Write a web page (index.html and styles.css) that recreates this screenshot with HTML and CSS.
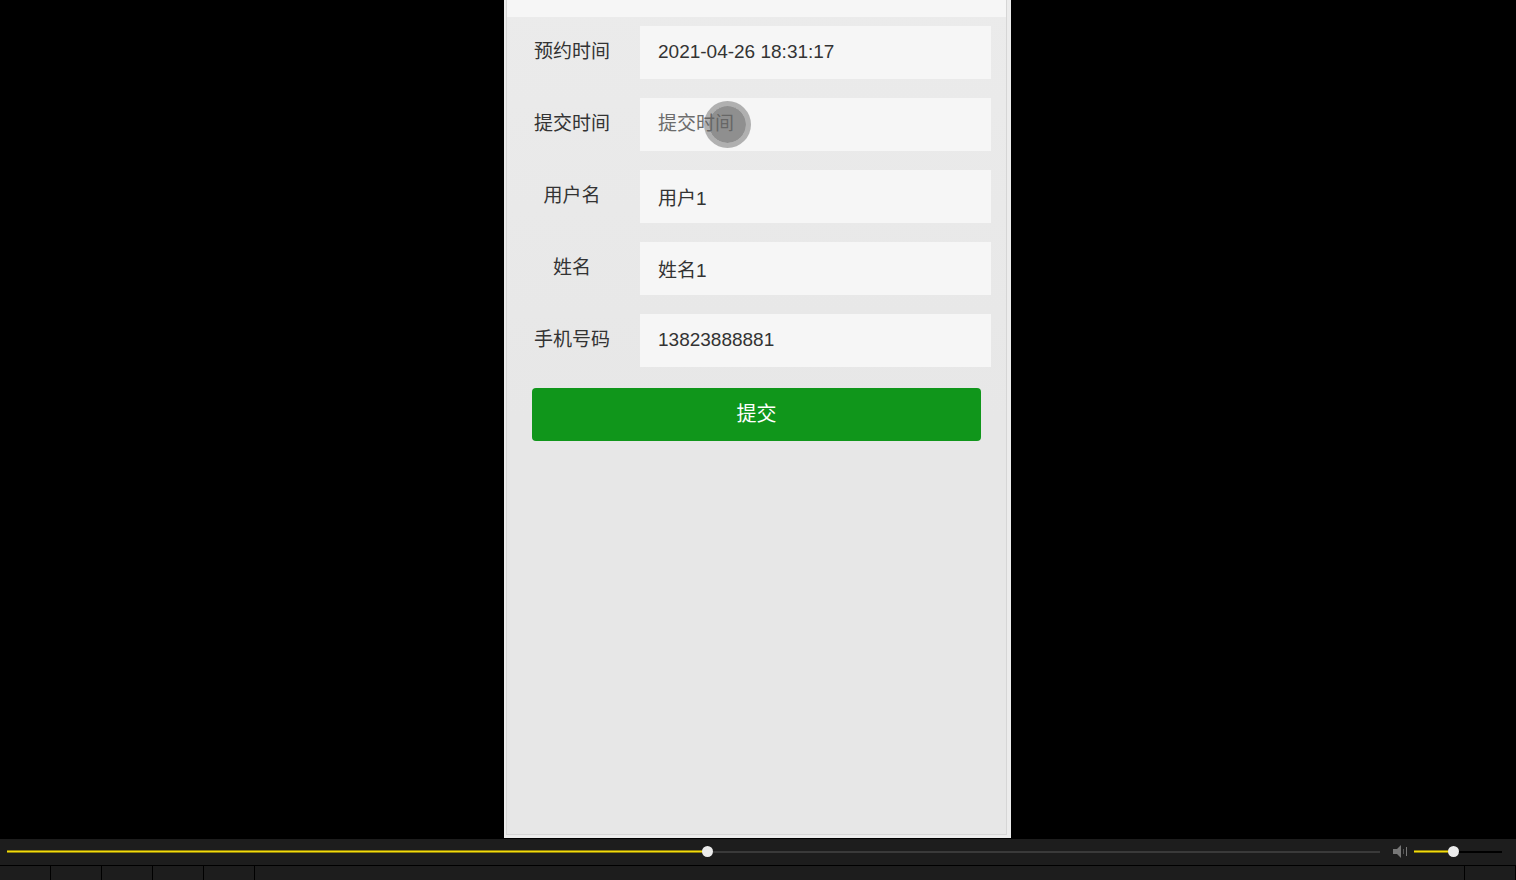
FILE: index.html
```html
<!doctype html>
<html lang="zh-CN">
	<head>
		<meta charset="utf-8">
		<title>预约</title>
		<link rel="stylesheet" href="styles.css">
	</head>
	<body>
		
		<main class="stage">
			<div class="phone">
				<div class="screen">
					<header class="topbar"></header>
					
					<form class="booking">
						<div class="row">
							<label for="booked">预约时间</label>
							<input type="text" id="booked" value="2021-04-26 18:31:17">
						</div>
						<div class="row">
							<label for="submitted">提交时间</label>
							<input type="text" id="submitted" placeholder="提交时间">
							<span class="touch"></span>
						</div>
						<div class="row">
							<label for="username">用户名</label>
							<input type="text" id="username" value="用户1">
						</div>
						<div class="row">
							<label for="fullname">姓名</label>
							<input type="text" id="fullname" value="姓名1">
						</div>
						<div class="row">
							<label for="phone">手机号码</label>
							<input type="text" id="phone" value="13823888881">
						</div>
						<button type="submit" class="submit">提交</button>
					</form>
				</div>
			</div>
		</main>
		
		<footer class="controls">
			<div class="timeline">
				<input type="range" class="seek" aria-label="播放进度" min="0" max="1000" value="510" style="--played: 51%">
				<button class="mute" aria-label="静音">
					<svg width="16" height="14" viewBox="0 0 16 14">
						<path d="M1 4h4l4-4v13l-4-4H1z" fill="#777"/>
						<path d="M11.500 4v5" stroke="#555" stroke-width="1"/>
						<path d="M14.500 2v9" stroke="#777" stroke-width="1"/>
					</svg>
				</button>
				<input type="range" class="volume" aria-label="音量" min="0" max="1000" value="440" style="--played: 44%">
			</div>
			<div class="buttons">
				<button aria-label="播放"></button>
				<button aria-label="停止"></button>
				<button aria-label="上一个"></button>
				<button aria-label="下一个"></button>
				<button aria-label="打开"></button>
				<button class="last" aria-label="全屏"></button>
			</div>
		</footer>
		
	</body>
</html>
```

FILE: styles.css
```css
* {
	box-sizing: border-box;
}
body {
	display: flex;
	flex-direction: column;
	height: 100vh;
	margin: 0;
	overflow: hidden;
	background: #000;
	font-family: "Liberation Sans", "Noto Sans CJK SC", sans-serif;
}
button,
input {
	margin: 0;
	font-family: inherit;
}

/* video picture */
.stage {
	display: flex;
	flex: 1;
	justify-content: center;
	min-height: 0;
	padding-right: 1px;
}
.phone {
	display: flex;
	width: 507px;
	max-width: 100%;
	padding: 0 4px 3px 2px;
	background: #ececec;
}
.screen {
	flex: 1;
	border: 1px solid #d6d6d6;
	border-top: 0;
	background: linear-gradient(#ebebeb, #e7e7e7 50%);
}
.topbar {
	height: 17px;
	background: #f6f6f6;
}
.booking {
	padding: 9px 15px 0 0;
}
.row {
	display: flex;
	position: relative;
	height: 53px;
	margin-bottom: 19px;
}
.row label {
	width: 133px;
	padding-right: 3px;
	font-size: 19px;
	line-height: 52px;
	text-align: center;
	color: #333;
}
.row input {
	flex: 1;
	min-width: 0;
	padding: 0 18px 1px;
	border: 0;
	background: #f6f6f6;
	font-size: 19px;
	color: #333;
}
.row input::placeholder {
	color: #6c6c6c;
}
.touch {
	position: absolute;
	top: 3px;
	left: 197px;
	width: 47px;
	height: 47px;
	border: 5px solid rgba(90, 90, 90, 0.45);
	border-radius: 50%;
	background: rgba(100, 100, 100, 0.7);
	background-clip: padding-box;
	pointer-events: none;
}
.submit {
	display: block;
	width: calc(100% - 35px);
	height: 53px;
	margin: 21px 10px 0 25px;
	padding: 0 0 4px;
	border: 0;
	border-radius: 4px;
	background: #10961b;
	font-size: 20px;
	color: #fff;
}

/* player */
.controls {
	border-top: 1px solid #000;
	background: #1d1d1d;
}
.timeline {
	display: flex;
	align-items: center;
	height: 26px;
	padding: 0 14px 1px 7px;
}
.timeline input {
	height: 11px;
	-webkit-appearance: none;
	appearance: none;
	background: none;
}
.seek {
	flex: 1;
	--rest: #3a3a3a;
}
.volume {
	width: 88px;
	--rest: #000;
}
.timeline input::-webkit-slider-runnable-track {
	height: 3px;
	background:
		linear-gradient(#8e800a 1px, #f3dc0b 1px, #f3dc0b 2px, #8e800a 2px) 0 0 / var(--played) 100% no-repeat,
		linear-gradient(transparent 1px, var(--rest) 1px);
}
.timeline input::-webkit-slider-thumb {
	-webkit-appearance: none;
	width: 11px;
	height: 11px;
	margin-top: -4px;
	border-radius: 50%;
	background: #ececec;
}
.mute {
	width: 34px;
	height: 14px;
	padding: 0 0 0 12px;
	border: 0;
	background: none;
}
.mute svg {
	display: block;
}
.buttons {
	display: flex;
	height: 15px;
	border-top: 1px solid #000;
	border-right: 1px solid #000;
}
.buttons button {
	width: 51px;
	padding: 0;
	border: 0;
	border-right: 1px solid #000;
	background: none;
}
.buttons .last {
	margin-left: auto;
	border-right: 0;
	border-left: 1px solid #000;
}
```
